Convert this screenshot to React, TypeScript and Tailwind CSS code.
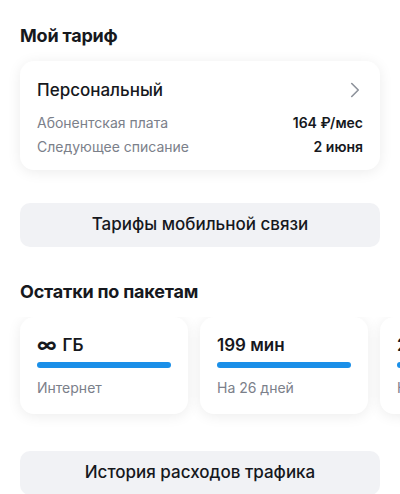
import React from 'react';
import { ChevronRight } from 'lucide-react';

const packs = [
    { title: '∞ ГБ', sub: 'Интернет', inf: true },
    { title: '199 мин', sub: 'На 26 дней' },
    { title: '200 SMS', sub: 'На 26 дней' },
];

const cardShadow = 'shadow-[0_2px_14px_rgba(0,0,0,0.08)]';

export default function App() {
    return (
        <div className="w-[400px] h-[494px] overflow-hidden bg-white font-['Inter','Roboto',sans-serif] text-[#16181d]">
            {/* Мой тариф */}
            <h2 className="px-5 pt-[25px] text-[18px] leading-[22px] font-bold tracking-[-0.2px]">Мой тариф</h2>

            <div className="px-5 mt-[14px]">
                <div className={`bg-white rounded-[14px] ${cardShadow} px-[17px] pt-[16px] pb-[14px]`}>
                    <div className="flex items-center justify-between">
                        <span className="text-[17px] leading-[24px] font-medium">Персональный</span>
                        <ChevronRight size={26} strokeWidth={1.5} className="text-[#8d929b] -mr-[5px]" />
                    </div>
                    <div className="mt-[11px] flex justify-between text-[14px] leading-[18px]">
                        <span className="text-[#7b808a]">Абонентская плата</span>
                        <span className="font-semibold">164 ₽/мес</span>
                    </div>
                    <div className="mt-[6px] flex justify-between text-[14px] leading-[18px]">
                        <span className="text-[#7b808a]">Следующее списание</span>
                        <span className="font-semibold">2 июня</span>
                    </div>
                </div>
            </div>

            <div className="px-5 mt-[33px]">
                <button className="w-full h-[44px] rounded-[10px] bg-[#f1f2f5] text-[17px] font-medium">
                    Тарифы мобильной связи
                </button>
            </div>

            {/* Остатки */}
            <h2 className="px-5 mt-[34px] text-[18px] leading-[22px] font-bold tracking-[-0.2px]">Остатки по пакетам</h2>

            <div className="flex gap-3 px-5 mt-[14px] pb-4 -mb-4 overflow-hidden">
                {packs.map((p) => (
                    <div
                        key={p.title}
                        className={`shrink-0 w-[168px] h-[97px] bg-white rounded-[14px] ${cardShadow} px-[17px] pt-[17px]`}
                    >
                        <div className="text-[17px] leading-[22px] font-semibold flex items-center gap-[6px]">
                            {p.inf ? (
                                <>
                                    <span className="text-[20px] font-bold leading-[22px]">∞</span>
                                    <span>ГБ</span>
                                </>
                            ) : (
                                p.title
                            )}
                        </div>
                        <div className="mt-[6px] h-[6px] rounded-full bg-[#1a8fe8]" />
                        <div className="mt-[11px] text-[14px] leading-[18px] text-[#7b808a]">{p.sub}</div>
                    </div>
                ))}
            </div>

            <div className="px-5 mt-[37px]">
                <button className="w-full h-[44px] rounded-[10px] bg-[#f1f2f5] text-[17px] font-medium">
                    История расходов трафика
                </button>
            </div>
        </div>
    );
}
